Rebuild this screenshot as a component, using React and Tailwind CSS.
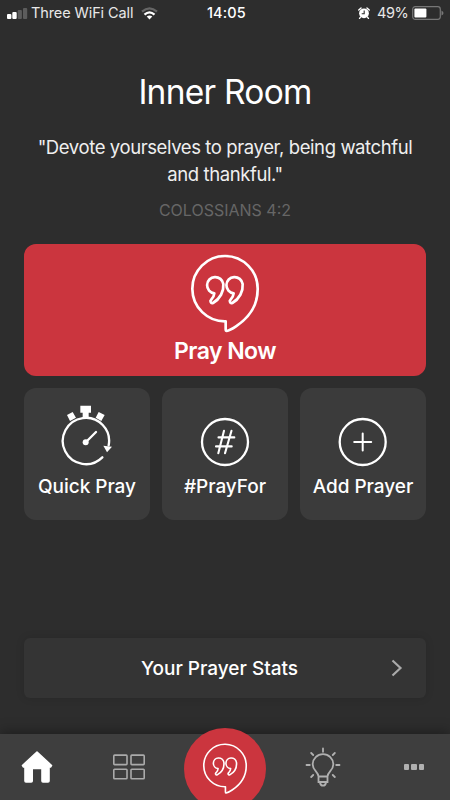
function QuoteBubble({ className, strokeWidth = 8 }) {
  return (
    <svg className={className} viewBox="90 40 210 240" fill="none" stroke="white" strokeWidth={strokeWidth} strokeLinejoin="round" strokeLinecap="round">
      <path d="M197 242A98 98 0 1 1 293 146C293 190 270 229 228 257C216 265 206 270 200 271Q197 271 197 266Z" />
      <path d="M163 158A24.5 24.5 0 1 1 190 130C192 152 180 175 159 187Q154 189 152 184Q150 181 153 178Q162 169 163 158Z" />
      <path d="M221 158A24.5 24.5 0 1 1 248 130C250 152 238 175 217 187Q212 189 210 184Q208 181 211 178Q220 169 221 158Z" />
    </svg>
  );
}

function StatusBar() {
  return (
    <header className="flex h-[26px] items-center text-[14.5px] leading-none text-[#e8e8e8]">
      <svg className="ml-[7px] h-[11px] w-[21px]" viewBox="0 0 21 11">
        <rect x="0" y="6" width="4.4" height="5" rx="1" fill="#fff" />
        <rect x="5.3" y="4" width="4.4" height="7" rx="1" fill="#fff" />
        <rect x="10.7" y="2" width="4.2" height="9" rx="1" fill="#5c5c5c" />
        <rect x="16" y="0" width="4.2" height="11" rx="1" fill="#5c5c5c" />
      </svg>
      <span className="ml-[3px] w-[103px] whitespace-nowrap tracking-[-0.1px]">Three WiFi Call</span>
      <svg className="ml-[7px] h-[13px] w-[17px]" viewBox="0 0 17 13" fill="none" strokeWidth="2.3">
        <path d="M1 4.7Q8.5 -2 16 4.7" stroke="#666" />
        <path d="M3.5 7.6Q8.5 3.2 13.5 7.6" stroke="#fff" />
        <path d="M5.7 9.6Q8.5 7.2 11.3 9.6L8.5 12.4Z" fill="#fff" />
      </svg>
      <span className="ml-[49px] w-[41px] whitespace-nowrap font-medium tracking-[0.1px] text-white">14:05</span>
      <svg className="ml-[110px] h-[12px] w-[12px]" viewBox="0 0 13 13">
        <circle cx="6.5" cy="6.8" r="5.3" fill="#fff" />
        <path d="M.8 3.3L3.3 1M12.2 3.3L9.7 1M2.7 11L1.7 12.3M10.3 11L11.3 12.3" stroke="#fff" strokeWidth="1.5" strokeLinecap="round" />
        <path d="M6.7 3.8V7.3H4" fill="none" stroke="#2d2d2d" strokeWidth="1.2" />
      </svg>
      <span className="ml-[7px] w-[31px] whitespace-nowrap tracking-[-0.4px]">49%</span>
      <svg className="ml-[4px] h-[14px] w-[33px]" viewBox="0 0 33 14">
        <rect x=".7" y=".7" width="27.6" height="12.6" rx="2.5" fill="none" stroke="#777" strokeWidth="1.2" />
        <rect x="2.4" y="2.4" width="12" height="9.2" rx="1" fill="#fff" />
        <path d="M29.5 4.5Q31.5 5.5 31.5 7T29.5 9.5Z" fill="#777" />
      </svg>
    </header>
  );
}

function Tile({ label, children }) {
  return (
    <button className="flex h-[132px] w-[126px] flex-col items-center rounded-[12px] bg-[#3b3b3b] pt-[17px]">
      {children}
      <span className="mt-[8px] whitespace-nowrap text-[19px] leading-6 font-medium tracking-[-0.05px]">{label}</span>
    </button>
  );
}

export default function App() {
  return (
    <div className="flex h-[800px] w-[450px] flex-col overflow-hidden bg-[#2d2d2d] text-white antialiased font-['Inter','Liberation_Sans',sans-serif]">
      <StatusBar />
      <main className="flex flex-1 flex-col px-6">
        <h1 className="mt-[46px] text-center text-[33.5px] leading-10 tracking-[-0.75px]">Inner Room</h1>
        <p className="-mx-2 mt-[22px] text-center text-[18.5px] leading-[27px] tracking-[-0.4px] text-[#efefef]">
          "Devote yourselves to prayer, being watchful<br />and thankful."
        </p>
        <p className="mt-3 text-center text-[16px] leading-5 text-[#666]">COLOSSIANS 4:2</p>

        <button className="mt-6 flex h-[132px] flex-col items-center rounded-[12px] bg-[#cb353e] pt-[10px]">
          <QuoteBubble className="h-[80px] w-[70px]" />
          <span className="mt-[3px] text-[23px] leading-7 font-semibold tracking-[-0.55px]">Pray Now</span>
        </button>

        <div className="mt-3 flex justify-between">
          <Tile label="Quick Pray">
            <svg className="h-[62px] w-[54px]" viewBox="119 60 162 186" fill="none" stroke="white" strokeWidth="7">
              <path d="M246 217A69.5 69.5 0 1 1 265 181" strokeLinecap="round" />
              <path d="M249 182L275 185L260 202Z" fill="white" stroke="none" />
              <path d="M180 62H212V83H205V96H187V83H180ZM140 90L157 81L167 98L149 108ZM235 81L253 90L243 108L226 98Z" fill="white" stroke="none" />
              <path d="M197 171L227 141" strokeLinecap="round" />
              <circle cx="196" cy="172" r="9" fill="white" stroke="none" />
            </svg>
          </Tile>
          <Tile label="#PrayFor">
            <svg className="h-[62px] w-[54px]" viewBox="0 0 54 62" fill="none" stroke="white" strokeWidth="2.3">
              <circle cx="27" cy="37" r="23" />
              <path d="M26 25.8L20.3 48.3M33.5 25.8L27 48.3M20.5 32.4H36.3M18 41.4H33.7" strokeLinecap="round" strokeWidth="2.1" />
            </svg>
          </Tile>
          <Tile label="Add Prayer">
            <svg className="h-[62px] w-[54px]" viewBox="0 0 54 62" fill="none" stroke="white" strokeWidth="2.3">
              <circle cx="26.7" cy="37" r="23" />
              <path d="M26.7 28.5V45.5M18.2 37H35.2" strokeLinecap="round" strokeWidth="2" />
            </svg>
          </Tile>
        </div>

        <button className="mt-[118px] flex h-[60px] items-center rounded-[6px] bg-[#343434] pr-[23px] shadow-[0_0_8px_rgba(0,0,0,0.12)]">
          <span className="flex-1 pt-[2px] pl-[24px] text-center text-[19px] font-medium">Your Prayer Stats</span>
          <svg className="h-[18px] w-[12px]" viewBox="0 0 12 18" fill="none" stroke="#aaa" strokeWidth="2.2">
            <path d="M1.5 1.5L9.5 9L1.5 16.5" />
          </svg>
        </button>
      </main>

      <nav className="flex h-[66px] items-center bg-[#3e3e3e] shadow-[0_-2px_12px_rgba(0,0,0,0.35)]">
        <div className="flex w-[73px] justify-center">
          <svg className="h-[34px] w-[32px]" viewBox="0 0 32 34" fill="white" stroke="white" strokeWidth="1.6" strokeLinejoin="round">
            <path d="M16 2L30.5 15.5L29.5 17H28V31Q28 32 27 32H22Q21 32 21 31V18.4H11.2V31Q11.2 32 10.2 32H5Q4 32 4 31V17H2.5L1.5 15.5Z" />
          </svg>
        </div>
        <div className="flex w-[111px] justify-center">
          <svg className="h-[28px] w-[34px]" viewBox="0 0 34 28" fill="none" stroke="#aaa" strokeWidth="1.6">
            <rect x="1.8" y="2.1" width="13.2" height="9.5" rx=".8" />
            <rect x="19" y="2.1" width="13.2" height="9.5" rx=".8" />
            <rect x="1.8" y="16.2" width="13.2" height="9.5" rx=".8" />
            <rect x="19" y="16.2" width="13.2" height="9.5" rx=".8" />
          </svg>
        </div>
        <div className="flex h-[82px] w-[82px] shrink-0 translate-y-[2px] justify-center rounded-full bg-[#cb353e] pt-[15px]">
          <QuoteBubble className="h-[52px] w-[46px]" strokeWidth={7.5} />
        </div>
        <div className="flex w-[113px] justify-center">
          <svg className="h-[40px] w-[36px]" viewBox="0 0 36 40" fill="none" stroke="#b0b0b0" strokeWidth="1.8" strokeLinecap="round">
            <path d="M13.5 29.5C13.5 25 7.7 23.5 7.7 17.5A10.3 10.3 0 0 1 28.3 17.5C28.3 23.5 22.5 25 22.5 29.5ZM13.5 30V35H22.5V30M15 35.5Q15.5 38.7 18 38.7T21 35.5" />
            <path d="M18 1.5V4.8M6.2 6L8.2 8M29.8 6L27.8 8M1.5 18H4.8M31.2 18H34.5M6.2 30L8.2 28M29.8 30L27.8 28" />
          </svg>
        </div>
        <div className="flex w-[71px] justify-center gap-[2px] pr-[1px]">
          <span className="h-[6px] w-[5.5px] rounded-[1px] bg-[#b0b0b0]" />
          <span className="h-[6px] w-[5.5px] rounded-[1px] bg-[#b0b0b0]" />
          <span className="h-[6px] w-[5.5px] rounded-[1px] bg-[#b0b0b0]" />
        </div>
      </nav>
    </div>
  );
}
